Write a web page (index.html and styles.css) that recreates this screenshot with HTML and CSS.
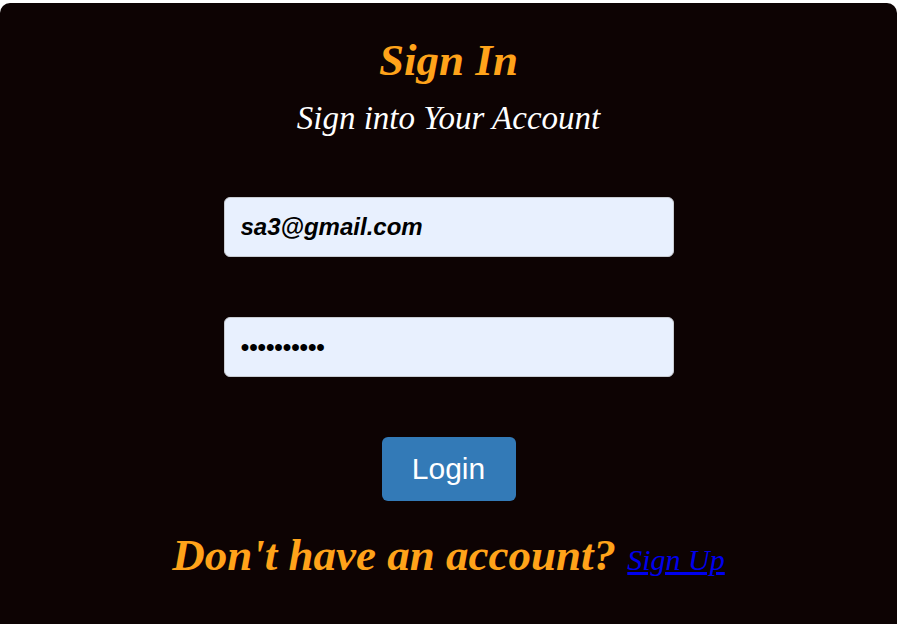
FILE: index.html
```html
<!DOCTYPE html>
<html>
<head>
<meta charset="utf-8">
<link rel="stylesheet" href="styles.css">
</head>
<body>
<div class="card">
  <h1 class="title">Sign In</h1>
  <p class="subtitle">Sign into Your Account</p>
  <form class="form">
    <input class="field email" type="text" value="sa3@gmail.com">
    <input class="field" type="password" value="1234567890">
    <button class="btn" type="button">Login</button>
  </form>
  <p class="footer">Don't have an account? <a href="#" class="link">Sign Up</a></p>
</div>
</body>
</html>
```
FILE: styles.css
```css
html, body {
  margin: 0;
  background: #ffffff;
}
body {
  padding-top: 3px;
  font-family: "Liberation Serif", serif;
}
.card {
  background: #0d0303;
  border-radius: 10px;
  height: 640px;
  display: flex;
  flex-direction: column;
  align-items: center;
  padding-top: 33px;
  box-sizing: border-box;
}
.title {
  margin: 0;
  color: #ffa31a;
  font-size: 45px;
  font-style: italic;
  font-weight: bold;
  line-height: 48px;
}
.subtitle {
  margin: 16px 0 0;
  color: #ffffff;
  font-size: 33px;
  font-style: italic;
  line-height: 36px;
}
.form {
  display: flex;
  flex-direction: column;
  align-items: center;
  margin-top: 61px;
}
.field {
  width: 450px;
  height: 60px;
  box-sizing: border-box;
  background: #e8f0fe;
  border: 1px solid #c8ccd2;
  border-radius: 6px;
  padding: 0 16px;
  font-family: "Liberation Sans", Arial, sans-serif;
  font-size: 24px;
  font-weight: bold;
  font-style: italic;
  color: #000;
  margin-bottom: 60px;
  outline: none;
}
.btn {
  width: 134px;
  height: 64px;
  background: #337ab7;
  border: none;
  border-radius: 6px;
  color: #fff;
  font-family: "Liberation Sans", Arial, sans-serif;
  font-size: 30px;
}
.footer {
  margin: 28px 0 0;
  color: #ffa31a;
  font-size: 45px;
  font-style: italic;
  font-weight: bold;
  line-height: 52px;
}
.link {
  color: #0000ee;
  font-size: 30px;
  font-weight: normal;
}
```
